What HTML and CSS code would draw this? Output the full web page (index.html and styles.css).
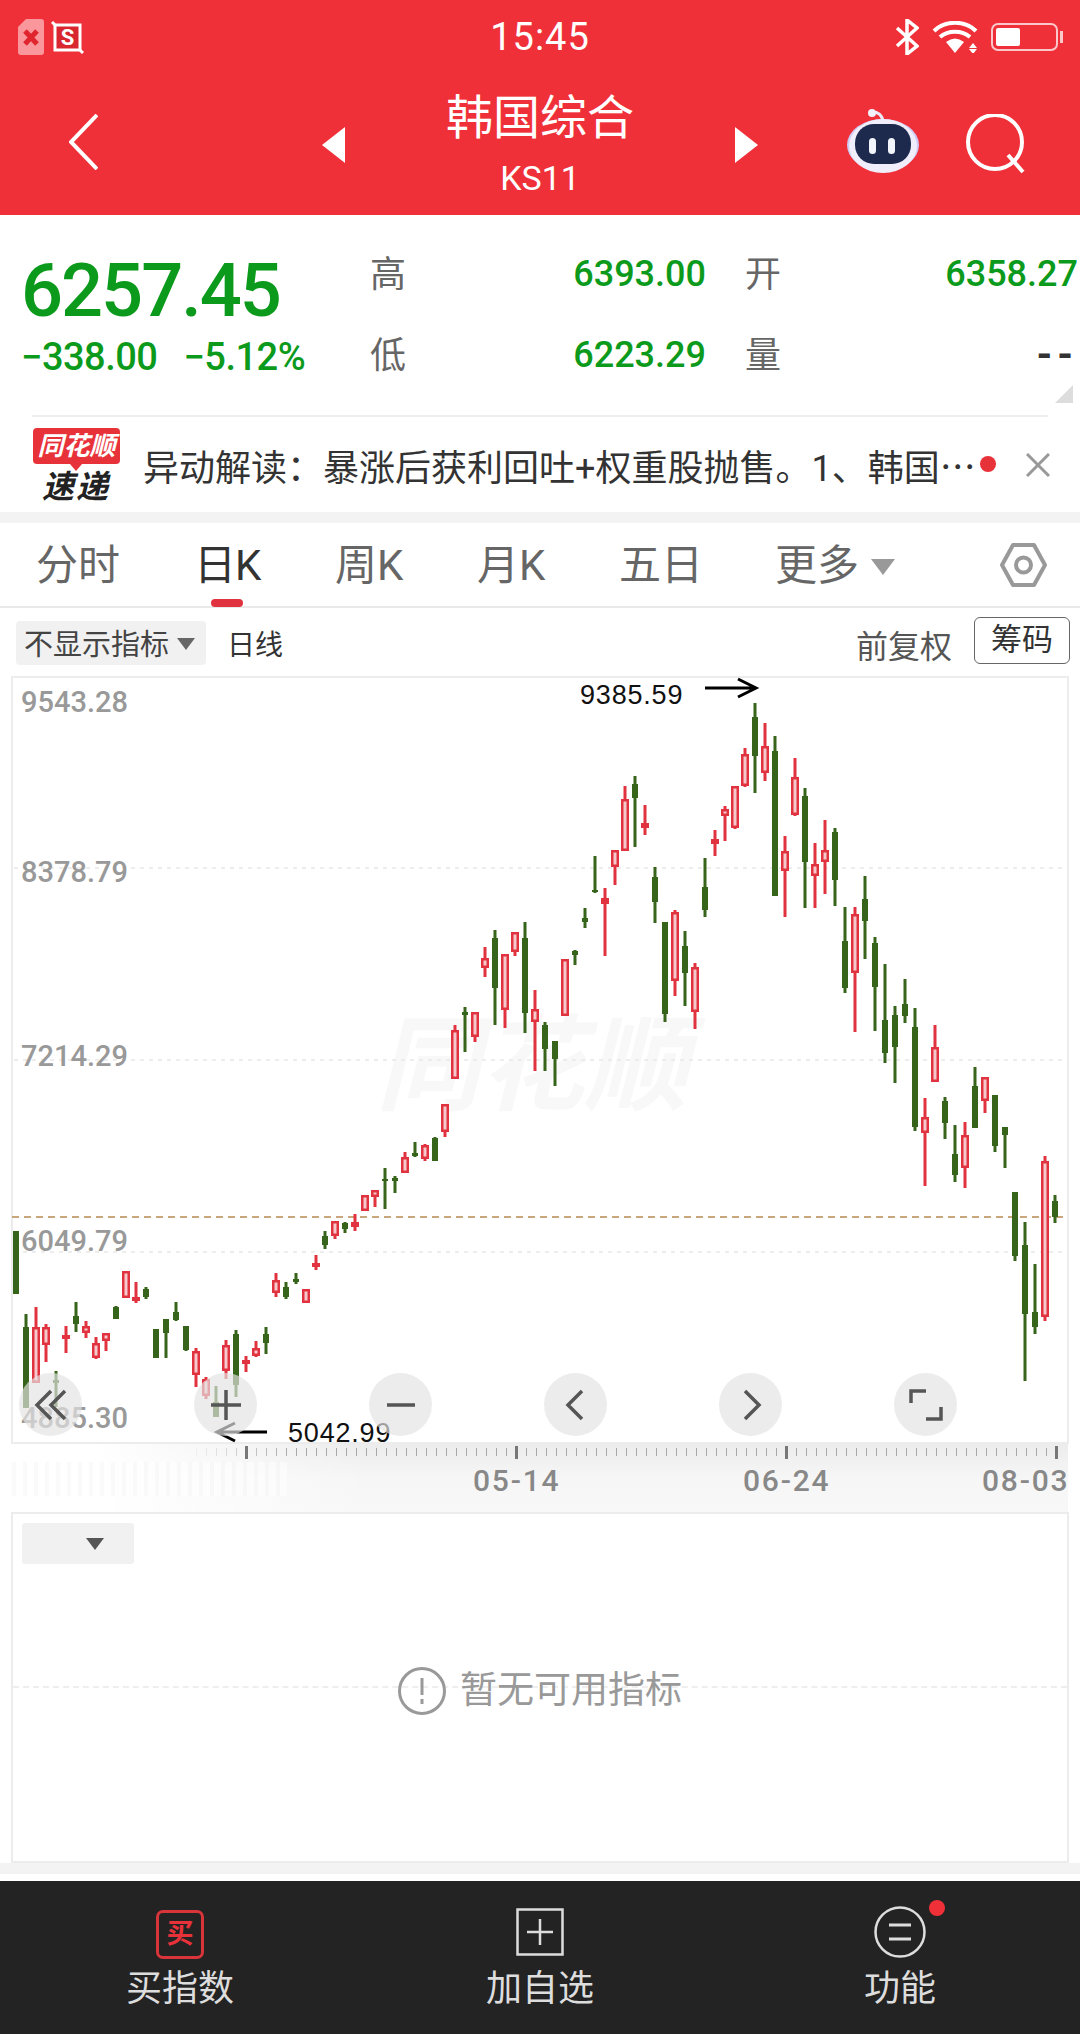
FILE: index.html
```html
<!DOCTYPE html>
<html lang="zh-CN">
<head>
  <meta charset="UTF-8">
  <meta name="viewport" content="width=device-width, initial-scale=1.0">
  <title>韩国综合</title>
  <link rel="stylesheet" href="styles.css">
</head>
<body>
  <header class="top">
    <div class="status">
      <div class="status-left">
        <svg width="26" height="36" viewBox="0 0 26 36"><path d="M8 0h15a3 3 0 0 1 3 3v30a3 3 0 0 1-3 3H3a3 3 0 0 1-3-3V8z" fill="#f9979c"/><path d="M7 12l12 13M19 12L7 25" stroke="#e0252f" stroke-width="5"/></svg>
        <svg width="33" height="33" viewBox="0 0 33 33"><path d="M4 4h25v25H4z" fill="#d8272e" stroke="#fff" stroke-width="3"/><path d="M1 1l4 4M28 28l4 4" stroke="#fff" stroke-width="3"/><text class="ic-s" x="16.500" y="24">S</text></svg>
      </div>
      <div class="clock">15:45</div>
      <div class="status-right">
        <svg width="24" height="36" viewBox="0 0 24 36"><path d="M2 9l20 18-10 8V1l10 8L2 27" fill="none" stroke="#fff" stroke-width="3.500"/></svg>
        <svg width="46" height="32" viewBox="0 0 46 32"><path d="M2 10c11-11 31-11 42 0M8 16c8-7 22-7 30 0" fill="none" stroke="#fff" stroke-width="4"/><path d="M14 21q9-7 18 0l-9 11zM41 22l4 5h-8zM37 28h8l-4 5z" fill="#fff"/></svg>
        <div class="battery"><div class="battery-fill"></div></div>
      </div>
    </div>
    <nav class="nav">
      <svg class="nav-back" width="29" height="56" viewBox="0 0 29 56"><path d="M28 1L2 28l26 27" fill="none" stroke="#fff" stroke-width="4"/></svg>
      <div class="nav-tri nav-tri-left"></div>
      <div class="nav-title">
        <div class="title-name">韩国综合</div>
        <div class="title-code">KS11</div>
      </div>
      <div class="nav-tri nav-tri-right"></div>
      <svg class="nav-robot" width="74" height="64" viewBox="0 0 74 64">
        <path d="M26 3c7 0 9 3 11 8" fill="none" stroke="#ece9fa" stroke-width="3"/>
        <circle cx="26" cy="4" r="4" fill="#f3f1fb"/>
        <ellipse cx="37" cy="36" rx="36" ry="26" fill="#cfcaf3"/>
        <ellipse cx="37" cy="37" rx="34" ry="27" fill="#f0eefb"/>
        <rect x="9" y="15" width="56" height="40" rx="19" fill="#1d2a4e"/>
        <rect x="23" y="29" width="7" height="16" rx="3.500" fill="#f2f5fc"/>
        <rect x="42" y="29" width="7" height="16" rx="3.500" fill="#f2f5fc"/>
      </svg>
      <svg class="nav-search" width="62" height="60" viewBox="0 0 62 60"><circle cx="31" cy="28" r="27" fill="none" stroke="#fff" stroke-width="4"/><path d="M44 41l15 17" stroke="#fff" stroke-width="4"/></svg>
    </nav>
  </header>

  <section class="quote">
    <div class="quote-main">
      <div class="price">6257.45</div>
      <div class="change"><span>−338.00</span><span>−5.12%</span></div>
    </div>
    <div class="quote-grid">
      <span class="q-label">高</span><span class="q-val">6393.00</span>
      <span class="q-label q-right">开</span><span class="q-val">6358.27</span>
      <span class="q-label">低</span><span class="q-val">6223.29</span>
      <span class="q-label q-right">量</span><span class="q-val q-dark">--</span>
    </div>
    <div class="quote-corner"></div>
  </section>

  <section class="news">
    <div class="news-logo">
      <div class="news-bubble">同花顺</div>
      <div class="news-fast">速递</div>
    </div>
    <div class="news-text">异动解读：暴涨后获利回吐+权重股抛售。1、韩国<span class="news-more">…</span></div>
    <div class="news-dot"></div>
    <svg class="news-close" width="24" height="24" viewBox="0 0 24 24"><path d="M1 1l22 22M23 1L1 23" stroke="#999" stroke-width="3"/></svg>
  </section>

  <div class="band"></div>

  <div class="tabs">
    <div class="tab tab-time">分时</div>
    <div class="tab tab-day">日K<i class="tab-mark"></i></div>
    <div class="tab tab-week">周K</div>
    <div class="tab tab-month">月K</div>
    <div class="tab tab-five">五日</div>
    <div class="tab tab-more">更多<i class="tri tri-more"></i></div>
    <svg class="tab-gear" width="48" height="44" viewBox="0 0 48 44"><path d="M13 2h21l11 20-11 20H13L2 22z" fill="none" stroke="#999" stroke-width="4" stroke-linejoin="round"/><circle cx="23.500" cy="22" r="7.500" fill="none" stroke="#999" stroke-width="4"/></svg>
  </div>

  <div class="tools">
    <div class="chip">不显示指标<i class="tri tri-chip"></i></div>
    <div class="tools-line">日线</div>
    <div class="tools-adj">前复权</div>
    <div class="tools-btn">筹码</div>
  </div>

  <div class="chart">
    <div class="watermark">同花顺</div>
    <svg id="candles" class="chart-svg" width="1080" height="768" viewBox="0 676 1080 768"></svg>
    <div class="y-label y-1">9543.28</div>
    <div class="y-label y-2">8378.79</div>
    <div class="y-label y-3">7214.29</div>
    <div class="y-label y-4">6049.79</div>
    <div class="y-label y-5">4885.30</div>
    <div class="mark mark-high">9385.59</div>
    <div class="mark mark-low">5042.99</div>
    <div class="chart-btns">
      <div class="chart-btn"><svg width="34" height="34" viewBox="0 0 34 34"><path d="M17 3L3 17l14 14M31 3L17 17l14 14" fill="none" stroke="#555" stroke-width="3.500"/></svg></div>
      <div class="chart-btn"><svg width="34" height="34" viewBox="0 0 34 34"><path d="M17 2v30M2 17h30" stroke="#555" stroke-width="3.500"/></svg></div>
      <div class="chart-btn"><svg width="34" height="34" viewBox="0 0 34 34"><path d="M3 17h28" stroke="#555" stroke-width="3.500"/></svg></div>
      <div class="chart-btn"><svg width="34" height="34" viewBox="0 0 34 34"><path d="M23 3L9 17l14 14" fill="none" stroke="#555" stroke-width="3.500"/></svg></div>
      <div class="chart-btn"><svg width="34" height="34" viewBox="0 0 34 34"><path d="M11 3l14 14-14 14" fill="none" stroke="#555" stroke-width="3.500"/></svg></div>
      <div class="chart-btn"><svg width="34" height="34" viewBox="0 0 34 34"><path d="M2 15V3h15M32 19v12H17" fill="none" stroke="#555" stroke-width="3.500"/></svg></div>
    </div>
  </div>

  <div class="axis">
    <div class="axis-ticks"></div>
    <i class="axis-major axis-m1"></i><i class="axis-major axis-m2"></i><i class="axis-major axis-m3"></i><i class="axis-major axis-m4"></i>
    <div class="axis-ghost"></div>
    <div class="axis-date axis-d1">05-14</div>
    <div class="axis-date axis-d2">06-24</div>
    <div class="axis-date axis-d3">08-03</div>
  </div>

  <section class="panel">
    <div class="panel-select"><i class="tri tri-panel"></i></div>
    <div class="panel-grid"></div>
    <div class="panel-empty">
      <svg width="48" height="48" viewBox="0 0 48 48"><circle cx="24" cy="24" r="22.500" fill="none" stroke="#999" stroke-width="3"/><path d="M24 11v17M24 32v5" stroke="#999" stroke-width="3"/></svg>
      <span>暂无可用指标</span>
    </div>
  </section>

  <div class="band band-low"></div>

  <footer class="foot">
    <div class="foot-item">
      <div class="foot-icon"><div class="buy-box">买</div></div>
      <div class="foot-label">买指数</div>
    </div>
    <div class="foot-item">
      <div class="foot-icon"><svg width="48" height="48" viewBox="0 0 48 48"><path d="M1.500 1.500h45v45h-45zM24 11v26M11 24h26" fill="none" stroke="#ddd" stroke-width="2.500"/></svg></div>
      <div class="foot-label">加自选</div>
    </div>
    <div class="foot-item">
      <div class="foot-icon"><svg width="52" height="52" viewBox="0 0 52 52"><circle cx="26" cy="26" r="24.500" fill="none" stroke="#ddd" stroke-width="2.500"/><path d="M15 19h22M15 33h22" stroke="#ddd" stroke-width="3"/></svg><i class="foot-dot"></i></div>
      <div class="foot-label">功能</div>
    </div>
  </footer>

  <script src="chart.js"></script>
</body>
</html>
```

FILE: styles.css
```css
* {
  box-sizing: border-box;
}

html, body {
  margin: 0;
  padding: 0;
}

body {
  position: relative;
  width: 1080px;
  height: 2034px;
  overflow: hidden;
  background-color: #fff;
  font-family: Roboto, "Noto Sans CJK SC", sans-serif;
  color: #333;
}

/* red header */
.top {
  height: 215px;
  background-color: #ef3039;
  color: #fff;
}

.status {
  position: relative;
  height: 74px;
  display: flex;
  align-items: center;
  justify-content: space-between;
  padding: 0 18px 0 18px;
}

.status-left, .status-right {
  display: flex;
  align-items: center;
}

.status-left {
  gap: 7px;
}

.status-right {
  gap: 13px;
}

.ic-s {
  font-family: Roboto, sans-serif;
  font-size: 22px;
  font-weight: 700;
  fill: #fff;
  text-anchor: middle;
}

.clock {
  position: absolute;
  left: 0;
  right: 0;
  top: 15px;
  text-align: center;
  font-size: 38px;
  line-height: 44px;
  letter-spacing: 1px;
}

.battery {
  position: relative;
  width: 67px;
  height: 28px;
  margin-right: 4px;
  padding: 3px;
  border: 2px solid #fbc7c9;
  border-radius: 7px;
}

.battery::after {
  content: "";
  position: absolute;
  right: -7px;
  top: 6px;
  width: 3px;
  height: 12px;
  background-color: #fbc7c9;
}

.battery-fill {
  width: 24px;
  height: 18px;
  background-color: #fff;
  border-radius: 2px;
}

.nav {
  position: relative;
  height: 141px;
}

.nav svg, .nav-tri {
  position: absolute;
}

.nav-back {
  left: 69px;
  top: 40px;
}

.nav-tri {
  top: 53px;
  width: 0;
  height: 0;
  border-top: 18px solid transparent;
  border-bottom: 18px solid transparent;
}

.nav-tri-left {
  left: 322px;
  border-right: 23px solid #fff;
}

.nav-tri-right {
  left: 735px;
  border-left: 23px solid #fff;
}

.nav-title {
  text-align: center;
}

.title-name {
  padding-top: 17px;
  font-size: 47px;
  line-height: 54px;
}

.title-code {
  font-size: 34px;
  line-height: 44px;
  margin-top: 11px;
}

.nav-robot {
  left: 846px;
  top: 35px;
}

.nav-search {
  left: 964px;
  top: 40px;
}

/* quote block */
.quote {
  position: relative;
  height: 202px;
  margin: 0;
  display: flex;
  border-bottom: 0;
}

.quote::after {
  content: "";
  position: absolute;
  left: 32px;
  right: 32px;
  bottom: 0;
  height: 2px;
  background-color: #eee;
}

.quote-main {
  width: 370px;
  padding: 36px 0 0 21px;
  color: #0c9a1c;
}

.price {
  font-size: 74px;
  line-height: 80px;
  font-weight: 500;
  letter-spacing: -2px;
}

.change {
  display: flex;
  gap: 26px;
  margin-top: 4px;
  font-size: 38px;
  line-height: 44px;
  font-weight: 500;
  letter-spacing: -0.5px;
}

.quote-grid {
  width: 710px;
  display: grid;
  grid-template-columns: 36px 300px 75px 297px;
  grid-auto-rows: 81px;
  padding-top: 38px;
}

.q-label {
  font-size: 36px;
  line-height: 44px;
  color: #666;
}

.q-right {
  text-align: right;
}

.q-val {
  text-align: right;
  font-size: 36px;
  line-height: 42px;
  font-weight: 500;
  color: #0c9a1c;
}

.q-dark {
  color: #333;
  font-weight: 700;
  font-size: 40px;
  letter-spacing: 5px;
}

.quote-corner {
  position: absolute;
  right: 7px;
  bottom: 14px;
  width: 0;
  height: 0;
  border-left: 18px solid transparent;
  border-bottom: 18px solid #ddd;
}

/* news strip */
.news {
  position: relative;
  height: 95px;
  display: flex;
  align-items: center;
}

.news-logo {
  width: 143px;
  height: 95px;
  padding: 11px 0 0 33px;
}

.news-bubble {
  position: relative;
  width: 87px;
  height: 36px;
  background-color: #e8323a;
  border-radius: 4px;
  color: #fff;
  font-size: 26px;
  line-height: 36px;
  font-weight: 700;
  font-style: italic;
  text-align: center;
}

.news-bubble::after {
  content: "";
  position: absolute;
  left: 37px;
  top: 36px;
  border-left: 6px solid transparent;
  border-right: 6px solid transparent;
  border-top: 7px solid #e8323a;
}

.news-fast {
  margin: 7px 0 0 9px;
  font-size: 32px;
  line-height: 32px;
  font-weight: 700;
  font-style: italic;
  color: #222;
  letter-spacing: 2px;
}

.news-text {
  padding-top: 4px;
  font-size: 36px;
  line-height: 50px;
  color: #333;
  white-space: nowrap;
}

.news-more {
  font-family: "Noto Sans CJK SC", sans-serif;
  font-size: 36px;
}

.news-dot {
  position: absolute;
  left: 980px;
  top: 39px;
  width: 16px;
  height: 16px;
  border-radius: 50%;
  background-color: #e8323a;
}

.news-close {
  position: absolute;
  left: 1026px;
  top: 36px;
}

.band {
  height: 11px;
  background-color: #f4f3f3;
}

/* period tabs */
.tabs {
  position: relative;
  height: 85px;
  border-bottom: 2px solid #e9e9e9;
  font-size: 42px;
  line-height: 60px;
  color: #666;
}

.tab {
  position: absolute;
  top: 13px;
  white-space: nowrap;
}

.tab-time { left: 36px; }
.tab-day { left: 194px; color: #333; letter-spacing: -1px; }
.tab-week { left: 335px; }
.tab-month { left: 477px; }
.tab-five { left: 619px; }
.tab-more { left: 775px; }

.tab-mark {
  position: absolute;
  left: 17px;
  top: 63px;
  width: 32px;
  height: 8px;
  border-radius: 4px;
  background-color: #e0323f;
}

.tri {
  position: absolute;
  width: 0;
  height: 0;
  border-left: 10px solid transparent;
  border-right: 10px solid transparent;
  border-top: 14px solid #888;
}

.tri-more {
  left: 96px;
  top: 23px;
  border-left-width: 12px;
  border-right-width: 12px;
  border-top-width: 16px;
  border-top-color: #999;
}

.tab-gear {
  position: absolute;
  left: 1000px;
  top: 20px;
}

/* toolbar above chart */
.tools {
  position: relative;
  height: 68px;
  display: flex;
  align-items: center;
  padding: 0 10px 14px 16px;
}

.chip {
  position: relative;
  width: 190px;
  height: 44px;
  margin-top: 16px;
  padding-left: 8px;
  background-color: #f1f1f1;
  border-radius: 4px;
  font-size: 29px;
  line-height: 48px;
  color: #444;
  white-space: nowrap;
}

.tri-chip {
  left: 161px;
  top: 17px;
  border-left-width: 9px;
  border-right-width: 9px;
  border-top-width: 12px;
  border-top-color: #666;
}

.tools-line {
  margin: 22px 0 0 21px;
  font-size: 28px;
  line-height: 44px;
}

.tools-adj {
  margin: 24px 0 0 auto;
  font-size: 32px;
  line-height: 44px;
  color: #555;
}

.tools-btn {
  width: 96px;
  height: 47px;
  margin: 10px 0 0 22px;
  border: 1.500px solid #666;
  border-radius: 6px;
  font-size: 31px;
  line-height: 44px;
  text-align: center;
}

/* candle chart */
.chart {
  position: relative;
  height: 768px;
}

.chart-svg {
  position: absolute;
  left: 0;
  top: 0;
}

.watermark {
  position: absolute;
  left: 376px;
  top: 329px;
  font-size: 104px;
  line-height: 124px;
  font-weight: 700;
  font-style: italic;
  color: #f8f8f8;
  white-space: nowrap;
}

.y-label {
  position: absolute;
  left: 21px;
  font-size: 29px;
  line-height: 34px;
  font-weight: 500;
  color: #999;
}

.y-1 { top: 9px; }
.y-2 { top: 179px; }
.y-3 { top: 363px; }
.y-4 { top: 548px; }
.y-5 { top: 725px; }

.mark {
  position: absolute;
  font-family: "Liberation Sans", sans-serif;
  font-size: 27px;
  line-height: 30px;
  letter-spacing: 0.8px;
  color: #111;
}

.mark-high {
  left: 580px;
  top: 4px;
}

.mark-low {
  left: 288px;
  top: 742px;
}

.chart-btns {
  position: absolute;
  left: 19px;
  top: 697px;
  display: flex;
  gap: 112px;
}

.chart-btn {
  width: 63px;
  height: 63px;
  display: flex;
  align-items: center;
  justify-content: center;
  border-radius: 50%;
  background-color: rgba(229, 227, 227, 0.68);
}

/* date axis */
.axis {
  position: relative;
  height: 68px;
  margin: 0 12px;
  background: linear-gradient(90deg, #fff 0, #fff 8%, rgba(255, 255, 255, 0) 34%), linear-gradient(#ececec, #f6f6f6 50%, #f8f8f8);
}

.axis-ticks {
  position: absolute;
  left: 174px;
  right: 6px;
  top: 4px;
  height: 8px;
  background: repeating-linear-gradient(90deg, #a8a8a8 0, #a8a8a8 1px, transparent 1px, transparent 10px);
  -webkit-mask-image: linear-gradient(90deg, transparent 0, #000 12%);
  mask-image: linear-gradient(90deg, transparent 0, #000 12%);
}

.axis-major {
  position: absolute;
  top: 2px;
  width: 3px;
  height: 13px;
  background-color: #777;
}

.axis-m1 { left: 233px; }
.axis-m2 { left: 503px; }
.axis-m3 { left: 773px; }
.axis-m4 { left: 1043px; }

.axis-ghost {
  position: absolute;
  left: 0;
  top: 18px;
  width: 275px;
  height: 34px;
  background: repeating-linear-gradient(90deg, #f5f5f5 0, #f5f5f5 4px, #fff 4px, #fff 11px);
  opacity: 0.5;
}

.axis-date {
  position: absolute;
  top: 20px;
  font-size: 30px;
  line-height: 34px;
  font-weight: 500;
  color: #888;
  letter-spacing: 1.800px;
  white-space: nowrap;
}

.axis-d1 { left: 461px; }
.axis-d2 { left: 731px; }
.axis-d3 { left: 970px; }

/* lower indicator panel */
.panel {
  position: relative;
  height: 351px;
  margin: 0 11px 0 11px;
  border: 2px solid #ececec;
}

.panel-select {
  position: relative;
  width: 112px;
  height: 41px;
  margin: 9px 0 0 9px;
  background-color: #f1f1f1;
  border-radius: 3px;
}

.tri-panel {
  left: 64px;
  top: 15px;
  border-left-width: 9px;
  border-right-width: 9px;
  border-top-width: 12px;
  border-top-color: #555;
}

.panel-grid {
  position: absolute;
  left: 0;
  right: 0;
  top: 172px;
  height: 0;
  border-top: 2px dashed #eee;
}

.panel-empty {
  position: absolute;
  left: 385px;
  top: 153px;
  display: flex;
  align-items: center;
  gap: 14px;
  font-size: 37px;
  line-height: 48px;
  color: #999;
}

.band-low {
  margin-top: 0;
  height: 11px;
}

/* bottom bar */
.foot {
  position: absolute;
  left: 0;
  right: 0;
  top: 1881px;
  height: 153px;
  display: grid;
  grid-template-columns: repeat(3, 1fr);
  background-color: #232323;
}

.foot-item {
  text-align: center;
}

.foot-icon {
  position: relative;
  height: 54px;
  margin-top: 24px;
  display: flex;
  align-items: center;
  justify-content: center;
}

.buy-box {
  width: 48px;
  height: 49px;
  margin-top: 4px;
  border: 3px solid #d8343a;
  border-radius: 7px;
  color: #e8323a;
  font-size: 27px;
  line-height: 42px;
  font-weight: 700;
}

.foot-dot {
  position: absolute;
  left: 209px;
  top: -5px;
  width: 16px;
  height: 16px;
  border-radius: 50%;
  background-color: #ef3039;
}

.foot-label {
  margin-top: 8px;
  font-size: 36px;
  line-height: 44px;
  color: #ddd;
}
```

FILE: chart.js
```js
// colour, high, body top, body bottom, low (page y of the candle)
var candles = [
  ['g',1231,1231,1294,1294],['g',1314,1327,1408,1408],['r',1307,1327,1383,1383],['r',1324,1327,1345,1362],
  ['g',1371,1380,1383,1407],['r',1326,1335,1338,1353],['g',1302,1316,1324,1332],['r',1321,1326,1333,1338],
  ['r',1337,1343,1358,1359],['r',1333,1333,1341,1351],['g',1306,1307,1319,1319],['r',1271,1271,1298,1298],
  ['r',1282,1297,1301,1303],['g',1287,1289,1297,1299],['g',1329,1329,1358,1358],['g',1319,1319,1333,1358],
  ['g',1302,1312,1320,1321],['g',1326,1326,1350,1351],['r',1348,1351,1375,1387],['r',1377,1379,1396,1399],
  ['g',1386,1402,1417,1417],['r',1340,1345,1371,1379],['g',1330,1334,1385,1397],['r',1356,1360,1364,1372],
  ['r',1341,1348,1356,1357],['g',1327,1334,1343,1354],['r',1273,1280,1293,1297],['g',1282,1287,1297,1299],
  ['g',1273,1279,1282,1284],['r',1289,1289,1303,1303],['r',1255,1263,1266,1270],['g',1231,1236,1245,1249],
  ['r',1221,1221,1236,1239],['g',1222,1223,1229,1233],['r',1214,1222,1227,1231],['r',1195,1195,1211,1211],
  ['r',1190,1190,1197,1207],['g',1168,1179,1181,1209],['g',1176,1178,1181,1193],['r',1152,1157,1173,1173],
  ['g',1142,1153,1156,1157],['r',1144,1145,1159,1161],['g',1137,1138,1161,1161],['r',1104,1104,1132,1137],
  ['r',1025,1030,1079,1079],['g',1007,1012,1015,1052],['r',1012,1012,1037,1042],['r',947,958,968,977],
  ['g',930,938,988,1025],['r',954,954,1010,1028],['r',932,932,952,956],['g',922,938,1013,1033],
  ['r',990,1009,1022,1071],['g',1022,1025,1049,1071],['g',1041,1041,1059,1086],['r',959,959,1016,1016],
  ['g',950,951,955,965],['g',908,918,922,928],['g',856,890,892,893],['r',888,898,904,956],
  ['r',850,850,867,885],['r',786,799,851,851],['g',776,784,798,847],['r',805,823,828,835],
  ['g',867,877,902,923],['g',922,922,1014,1022],['r',910,912,981,996],['g',931,946,973,1006],
  ['r',963,967,1012,1029],['g',858,887,910,917],['r',830,839,844,856],['r',806,809,816,841],
  ['r',786,786,828,829],['r',748,754,786,787],['g',703,717,756,793],['r',723,746,773,781],
  ['g',736,751,896,896],['r',836,851,871,917],['r',758,777,815,816],['g',788,796,862,908],
  ['r',843,864,876,908],['r',820,850,862,894],['g',828,832,880,906],['g',907,941,988,993],
  ['r',907,914,973,1032],['g',876,899,921,959],['g',937,943,987,1031],['g',964,1020,1053,1063],
  ['g',1006,1015,1047,1083],['g',979,1004,1016,1023],['g',1008,1027,1127,1131],['r',1098,1117,1133,1186],
  ['r',1025,1047,1082,1082],['g',1097,1101,1123,1139],['g',1125,1154,1175,1182],['r',1122,1135,1168,1188],
  ['g',1067,1086,1128,1128],['r',1077,1077,1101,1113],['g',1095,1095,1146,1152],['g',1127,1127,1135,1168],
  ['g',1192,1192,1256,1261],['g',1222,1245,1314,1381],['g',1264,1312,1327,1334],['r',1156,1161,1317,1321],
  ['g',1195,1201,1217,1223]
];

var GREEN = '#36641b';
var RED = '#e0333f';

function rect(x, y, w, h, fill) {
  return '<rect x="' + x + '" y="' + y + '" width="' + w + '" height="' + h + '" fill="' + fill + '"/>';
}

function line(x1, y1, x2, y2, colour, width, dash) {
  return '<line x1="' + x1 + '" y1="' + y1 + '" x2="' + x2 + '" y2="' + y2 + '" stroke="' + colour +
    '" stroke-width="' + width + '"' + (dash ? ' stroke-dasharray="' + dash + '"' : '') + '/>';
}

var html = '';

// frame and grid
html += line(12, 676, 12, 1444, '#ececec', 2);
html += line(11, 677, 1068, 677, '#ececec', 2);
html += line(1068, 676, 1068, 1444, '#ececec', 2);
html += line(11, 1443, 1068, 1443, '#ececec', 2);
[868, 1060, 1252].forEach(function(y) {
  html += line(14, y, 1067, y, '#e8e8e8', 1.5, '4 5');
});
html += line(12, 1217, 1068, 1217, '#c9a67c', 2, '7 5');

candles.forEach(function(c, i) {
  var x = Math.round(15.8 + 9.99 * i);
  var colour = c[0] == 'g' ? GREEN : RED;
  if (c[4] > c[1]) {
    html += rect(x - 1.5, c[1], 3, c[4] - c[1], colour);
  }
  if (c[0] == 'g') {
    html += rect(x - 3, c[2], 6, Math.max(c[3] - c[2], 2), colour);
  } else {
    html += rect(x - 4, c[2], 8, Math.max(c[3] - c[2], 4), colour);
    if (c[3] - c[2] > 6) {
      html += rect(x - 1.5, c[2] + 2.5, 3, c[3] - c[2] - 5, '#f7c9cc');
    }
  }
});

// high and low arrows
html += '<path d="M705 688h51M738 679l18 9-18 9" fill="none" stroke="#000" stroke-width="3"/>';
html += '<path d="M267 1432h-50M235 1423l-18 9 18 9" fill="none" stroke="#000" stroke-width="3"/>';

document.getElementById('candles').innerHTML = html;
```
